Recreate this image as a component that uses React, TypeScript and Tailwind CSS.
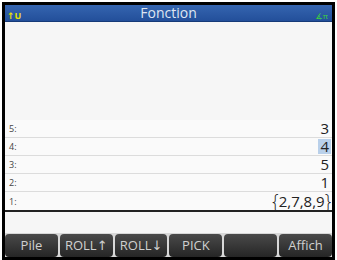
import React from 'react';

const rows = [
    { n: '5:', v: '3' },
    { n: '4:', v: '4', sel: true },
    { n: '3:', v: '5' },
    { n: '2:', v: '1' },
    { n: '1:', v: '2,7,8,9', list: true },
];

const keys = ['Pile', 'ROLL↑', 'ROLL↓', 'PICK', '', 'Affich'];

export default function App() {
    return (
        <div className="w-[337px] h-[260px] bg-white pt-[2px] px-[2px]" style={{ fontFamily: '"Open Sans", "DejaVu Sans", sans-serif' }}>
            <div className="w-full h-full border-[3px] border-black flex flex-col bg-[#f6f6f6]">
                {/* barre de titre */}
                <div className="relative h-[17px] bg-gradient-to-b from-[#3565b0] to-[#234f9a] border-b border-[#163a78] flex items-center justify-center">
                    <span className="text-[14px] leading-none text-[#dfe6f2]">Fonction</span>
                    <span className="absolute left-[2px] bottom-[1px] text-[9px] leading-none font-bold text-[#e8e000]">↑U</span>
                    <span className="absolute right-[4px] bottom-[1px] text-[8px] leading-none text-[#3cd43c]">∡π</span>
                </div>

                {/* pile */}
                <div className="flex-1 flex flex-col justify-end">
                    {rows.map((r, i) => (
                        <div
                            key={i}
                            className={`flex items-center justify-between pl-[4px] pr-[1px] bg-[#fafafa] ${i === rows.length - 1 ? 'h-[20px] border-b-2 border-[#222]' : 'h-[18px] border-b border-[#dcdcdc]'}`}
                        >
                            <span className="text-[9px] text-[#444] leading-none">{r.n}</span>
                            {r.list ? (
                                <span className="flex items-center text-[15px] leading-[16px] text-[#222]">
                                    <span className="inline-block text-[18px] leading-[16px] scale-y-110 font-light">{'{'}</span>
                                    <span>{r.v}</span>
                                    <span className="inline-block text-[18px] leading-[16px] scale-y-110 font-light">{'}'}</span>
                                </span>
                            ) : (
                                <span className={`text-[15px] leading-[15px] text-[#222] px-[2px] ${r.sel ? 'bg-[#b9d0ea]' : ''}`}>{r.v}</span>
                            )}
                        </div>
                    ))}
                </div>

                {/* ligne de saisie */}
                <div className="h-[21px] bg-[#f6f6f6]" />

                {/* touches */}
                <div className="h-[24px] flex gap-[2px] bg-[#d8d8d8] pt-[1px]">
                    {keys.map((k, i) => (
                        <div
                            key={i}
                            className="flex-1 rounded-[4px] bg-gradient-to-b from-[#4a4a4a] to-[#262626] flex items-center justify-center text-[13px] leading-none text-[#d0d0d0]"
                        >
                            {k}
                        </div>
                    ))}
                </div>
            </div>
        </div>
    );
}
